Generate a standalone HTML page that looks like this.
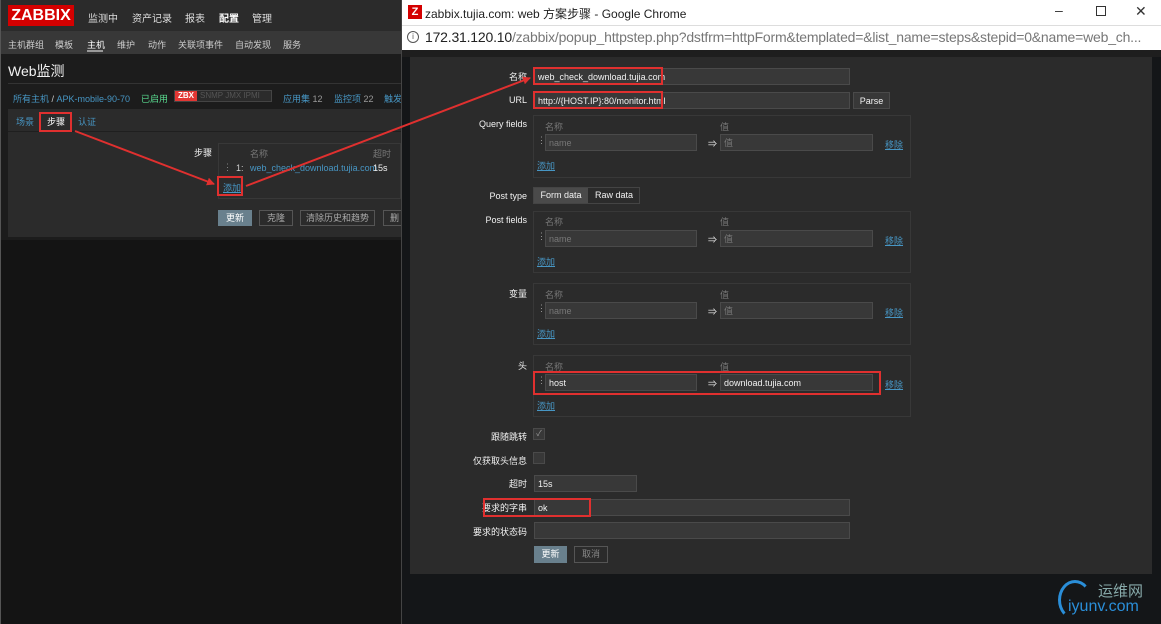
<!DOCTYPE html>
<html><head><meta charset="utf-8"><style>
*{margin:0;padding:0;box-sizing:border-box}
body{width:1161px;height:624px;overflow:hidden;background:#0e1012;font-family:"Liberation Sans","Noto Sans CJK SC",sans-serif;font-size:9px;color:#f2f2f2;position:relative}
.a{position:absolute;white-space:nowrap}
.inp{position:absolute;background:#383838;border:1px solid #4a4a4a;height:17px;color:#f2f2f2;font-size:9px;padding:3px 3px;line-height:10px}
.ph{color:#777}
.box{position:absolute;border:1px solid #383838;background:#2b2b2b}
.lnk{color:#4796c4;text-decoration:underline}
.red{position:absolute;border:2px solid #e0302f}
.hd{color:#777}
</style></head><body>
<div class="a" style="left:0;top:0;width:401px;height:624px;background:#141414"></div>
<div class="a" style="left:0;top:0;width:401px;height:31px;background:#2b2b2b"></div>
<div class="a" style="left:8px;top:5px;width:66px;height:21px;background:#d40000;color:#fff;font-size:16px;font-weight:bold;line-height:21px;text-align:center">ZABBIX</div>
<div class="a" style="left:88px;top:10px;font-size:10px;color:#ddd">监测中</div>
<div class="a" style="left:132px;top:10px;font-size:10px;color:#ddd">资产记录</div>
<div class="a" style="left:185px;top:10px;font-size:10px;color:#ddd">报表</div>
<div class="a" style="left:219px;top:10px;font-size:10px;color:#fff;font-weight:bold">配置</div>
<div class="a" style="left:252px;top:10px;font-size:10px;color:#ddd">管理</div>
<div class="a" style="left:0;top:31px;width:401px;height:23px;background:#383838"></div>
<div class="a" style="left:8px;top:38px;color:#ccc">主机群组</div>
<div class="a" style="left:55px;top:38px;color:#ccc">模板</div>
<div class="a" style="left:87px;top:38px;color:#fff">主机</div>
<div class="a" style="left:87px;top:50px;width:16px;height:2px;background:#999"></div>
<div class="a" style="left:117px;top:38px;color:#ccc">维护</div>
<div class="a" style="left:148px;top:38px;color:#ccc">动作</div>
<div class="a" style="left:178px;top:38px;color:#ccc">关联项事件</div>
<div class="a" style="left:235px;top:38px;color:#ccc">自动发现</div>
<div class="a" style="left:283px;top:38px;color:#ccc">服务</div>
<div class="a" style="left:0;top:54px;width:401px;height:56px;background:#1c1c1c"></div>
<div class="a" style="left:8px;top:61px;font-size:14px;color:#f2f2f2">Web监测</div>
<div class="a" style="left:8px;top:83px;width:393px;height:1px;background:#333"></div>
<div class="a" style="left:13px;top:92px;color:#4796c4">所有主机 <span style="color:#ccc">/</span> APK-mobile-90-70</div>
<div class="a" style="left:141px;top:92px;color:#59db8f">已启用</div>
<div class="a" style="left:174px;top:90px;width:98px;height:12px;border:1px solid #444;background:#2b2b2b"></div>
<div class="a" style="left:175px;top:91px;width:22px;height:10px;background:#e33734;color:#fff;font-size:8px;line-height:10px;text-align:center;font-weight:bold">ZBX</div>
<div class="a" style="left:200px;top:91px;color:#555;font-size:8px">SNMP JMX IPMI</div>
<div class="a" style="left:283px;top:92px;color:#4796c4">应用集 <span style="color:#999">12</span></div>
<div class="a" style="left:334px;top:92px;color:#4796c4">监控项 <span style="color:#999">22</span></div>
<div class="a" style="left:384px;top:92px;color:#4796c4">触发</div>
<div class="a" style="left:0;top:110px;width:401px;height:130px;background:#1c1c1c"></div>
<div class="a" style="left:8px;top:109px;width:393px;height:128px;background:#2b2b2b"></div>
<div class="a" style="left:8px;top:131px;width:393px;height:1px;background:#1f1f1f"></div>
<div class="a" style="left:16px;top:115px;color:#4796c4">场景</div>
<div class="a" style="left:47px;top:115px;color:#fff">步骤</div>
<div class="a" style="left:78px;top:115px;color:#4796c4">认证</div>
<div class="red" style="left:39px;top:112px;width:33px;height:20px"></div>
<div class="a" style="left:194px;top:146px;color:#f2f2f2">步骤</div>
<div class="a" style="left:218px;top:143px;width:183px;height:56px;border:1px solid #383838"></div>
<div class="a hd" style="left:250px;top:147px">名称</div>
<div class="a hd" style="left:373px;top:147px">超时</div>
<div class="a" style="left:223px;top:162px;color:#888">⋮</div>
<div class="a" style="left:236px;top:163px;color:#ccc">1:</div>
<div class="a" style="left:250px;top:163px;color:#4796c4">web_check_download.tujia.com</div>
<div class="a" style="left:373px;top:163px;color:#f2f2f2">15s</div>
<div class="a" style="left:223px;top:181px;color:#4796c4;text-decoration:underline">添加</div>
<div class="red" style="left:217px;top:176px;width:26px;height:20px"></div>
<div class="a" style="left:218px;top:210px;width:34px;height:16px;background:#69808d;color:#fff;text-align:center;line-height:16px">更新</div>
<div class="a" style="left:259px;top:210px;width:34px;height:16px;border:1px solid #555;color:#aaa;text-align:center;line-height:14px">克隆</div>
<div class="a" style="left:300px;top:210px;width:75px;height:16px;border:1px solid #555;color:#aaa;text-align:center;line-height:14px">清除历史和趋势</div>
<div class="a" style="left:383px;top:210px;width:20px;height:16px;border:1px solid #555;color:#aaa;line-height:14px;padding-left:6px">删</div>
<div class="a" style="left:0;top:0;width:1px;height:624px;background:#555"></div>
<!-- popup -->
<div class="a" style="left:401px;top:0;width:760px;height:624px;background:#141618;border-left:1px solid #444"></div>
<div class="a" style="left:402px;top:0;width:759px;height:25px;background:#fff"></div>
<div class="a" style="left:408px;top:5px;width:14px;height:14px;background:#d40000;color:#fff;font-weight:bold;font-size:11px;text-align:center;line-height:14px">Z</div>
<div class="a" style="left:425px;top:5px;font-size:12px;color:#222">zabbix.tujia.com: web 方案步骤 - Google Chrome</div>
<div class="a" style="left:1055px;top:2px;font-size:14px;color:#333">–</div>
<div class="a" style="left:1096px;top:6px;width:10px;height:10px;border:1px solid #333"></div>
<div class="a" style="left:1135px;top:3px;font-size:14px;color:#333">✕</div>
<div class="a" style="left:402px;top:25px;width:759px;height:25px;background:#fff;border-top:1px solid #ddd"></div>
<div class="a" style="left:407px;top:31px;width:12px;height:12px;border:1px solid #555;border-radius:50%;font-size:8px;color:#555;text-align:center;line-height:10px">i</div>
<div class="a" style="left:425px;top:29px;font-size:14px;letter-spacing:-0.2px;color:#222">172.31.120.10<span style="color:#777">/zabbix/popup_httpstep.php?dstfrm=httpForm&amp;templated=&amp;list_name=steps&amp;stepid=0&amp;name=web_ch...</span></div>
<div class="a" style="left:402px;top:50px;width:759px;height:7px;background:#1e1e1e"></div>
<div class="a" style="left:410px;top:57px;width:742px;height:517px;background:#2b2b2b"></div>
<!-- form -->
<div class="a" style="left:400px;top:70px;width:127px;text-align:right">名称</div>
<div class="inp" style="left:534px;top:68px;width:316px">web_check_download.tujia.com</div>
<div class="red" style="left:533px;top:67px;width:130px;height:18px"></div>
<div class="a" style="left:400px;top:95px;width:127px;text-align:right">URL</div>
<div class="inp" style="left:534px;top:92px;width:316px">http://{HOST.IP}:80/monitor.html</div>
<div class="red" style="left:533px;top:91px;width:130px;height:18px"></div>
<div class="inp" style="left:853px;top:92px;width:37px;text-align:center">Parse</div>

<div class="a" style="left:400px;top:119px;width:127px;text-align:right">Query fields</div>
<div class="box" style="left:533px;top:115px;width:378px;height:63px"></div>
<div class="a hd" style="left:545px;top:120px">名称</div><div class="a hd" style="left:720px;top:120px">值</div>
<div class="a" style="left:537px;top:135px;color:#999">⋮</div>
<div class="inp ph" style="left:545px;top:134px;width:152px">name</div>
<div class="a" style="left:708px;top:137px">⇒</div>
<div class="inp ph" style="left:720px;top:134px;width:153px">值</div>
<div class="a lnk" style="left:885px;top:138px">移除</div>
<div class="a lnk" style="left:537px;top:159px">添加</div>

<div class="a" style="left:400px;top:191px;width:127px;text-align:right">Post type</div>
<div class="a" style="left:533px;top:187px;width:107px;height:17px;border:1px solid #444;background:#2b2b2b"></div>
<div class="a" style="left:534px;top:188px;width:54px;height:15px;background:#4a4a4a;text-align:center;line-height:15px">Form data</div>
<div class="a" style="left:589px;top:188px;width:50px;height:15px;text-align:center;line-height:15px">Raw data</div>

<div class="a" style="left:400px;top:215px;width:127px;text-align:right">Post fields</div>
<div class="box" style="left:533px;top:211px;width:378px;height:62px"></div>
<div class="a hd" style="left:545px;top:215px">名称</div><div class="a hd" style="left:720px;top:215px">值</div>
<div class="a" style="left:537px;top:231px;color:#999">⋮</div>
<div class="inp ph" style="left:545px;top:230px;width:152px">name</div>
<div class="a" style="left:708px;top:233px">⇒</div>
<div class="inp ph" style="left:720px;top:230px;width:153px">值</div>
<div class="a lnk" style="left:885px;top:234px">移除</div>
<div class="a lnk" style="left:537px;top:255px">添加</div>

<div class="a" style="left:400px;top:287px;width:127px;text-align:right">变量</div>
<div class="box" style="left:533px;top:283px;width:378px;height:62px"></div>
<div class="a hd" style="left:545px;top:288px">名称</div><div class="a hd" style="left:720px;top:288px">值</div>
<div class="a" style="left:537px;top:303px;color:#999">⋮</div>
<div class="inp ph" style="left:545px;top:302px;width:152px">name</div>
<div class="a" style="left:708px;top:305px">⇒</div>
<div class="inp ph" style="left:720px;top:302px;width:153px">值</div>
<div class="a lnk" style="left:885px;top:306px">移除</div>
<div class="a lnk" style="left:537px;top:327px">添加</div>

<div class="a" style="left:400px;top:359px;width:127px;text-align:right">头</div>
<div class="box" style="left:533px;top:355px;width:378px;height:62px"></div>
<div class="a hd" style="left:545px;top:360px">名称</div><div class="a hd" style="left:720px;top:360px">值</div>
<div class="a" style="left:537px;top:375px;color:#999">⋮</div>
<div class="inp" style="left:545px;top:374px;width:152px">host</div>
<div class="a" style="left:708px;top:377px">⇒</div>
<div class="inp" style="left:720px;top:374px;width:153px">download.tujia.com</div>
<div class="a lnk" style="left:885px;top:378px">移除</div>
<div class="a lnk" style="left:537px;top:399px">添加</div>
<div class="red" style="left:533px;top:371px;width:348px;height:24px"></div>

<div class="a" style="left:400px;top:430px;width:127px;text-align:right">跟随跳转</div>
<div class="a" style="left:533px;top:428px;width:12px;height:12px;border:1px solid #4a4a4a;background:#383838;color:#999;font-size:8px;text-align:center;line-height:10px">✓</div>
<div class="a" style="left:400px;top:454px;width:127px;text-align:right">仅获取头信息</div>
<div class="a" style="left:533px;top:452px;width:12px;height:12px;border:1px solid #4a4a4a;background:#383838"></div>
<div class="a" style="left:400px;top:477px;width:127px;text-align:right">超时</div>
<div class="inp" style="left:534px;top:475px;width:103px">15s</div>
<div class="a" style="left:400px;top:501px;width:127px;text-align:right">要求的字串</div>
<div class="inp" style="left:534px;top:499px;width:316px">ok</div>
<div class="red" style="left:483px;top:498px;width:108px;height:19px"></div>
<div class="a" style="left:400px;top:525px;width:127px;text-align:right">要求的状态码</div>
<div class="inp" style="left:534px;top:522px;width:316px"></div>
<div class="a" style="left:534px;top:546px;width:33px;height:17px;background:#69808d;text-align:center;line-height:17px;color:#fff">更新</div>
<div class="a" style="left:574px;top:546px;width:34px;height:17px;border:1px solid #555;text-align:center;line-height:15px;color:#888">取消</div>
<!-- watermark -->
<div class="a" style="left:1058px;top:580px;width:34px;height:40px;border:3px solid #2a8ed8;border-right-color:transparent;border-bottom-color:transparent;border-radius:50%"></div>
<div class="a" style="left:1098px;top:580px;font-size:15px;color:#8aa">运维网</div>
<div class="a" style="left:1068px;top:598px;font-size:16px;color:#2a8ed8">iyunv.com</div>
<svg class="a" style="left:0;top:0" width="1161" height="624">
<defs><marker id="m" markerWidth="8" markerHeight="8" refX="7" refY="4" orient="auto" markerUnits="userSpaceOnUse"><path d="M0,0 L8,4 L0,8z" fill="#e0302f"/></marker></defs>
<line x1="75" y1="131" x2="214" y2="184" stroke="#e0302f" stroke-width="2" marker-end="url(#m)"/>
<line x1="246" y1="186" x2="530" y2="78" stroke="#e0302f" stroke-width="2" marker-end="url(#m)"/>
</svg>
</body></html>
